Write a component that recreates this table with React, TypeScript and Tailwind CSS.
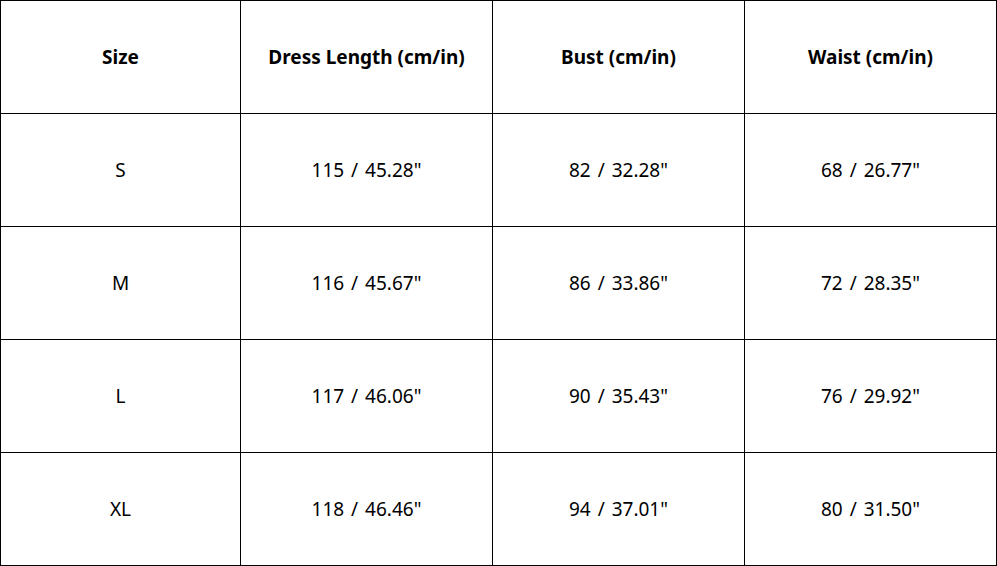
const headers = ['Size', 'Dress Length (cm/in)', 'Bust (cm/in)', 'Waist (cm/in)']

const rows = [
  ['S', '115 / 45.28"', '82 / 32.28"', '68 / 26.77"'],
  ['M', '116 / 45.67"', '86 / 33.86"', '72 / 28.35"'],
  ['L', '117 / 46.06"', '90 / 35.43"', '76 / 29.92"'],
  ['XL', '118 / 46.46"', '94 / 37.01"', '80 / 31.50"'],
]

export default function App() {
  return (
    <div className="w-[997px] h-[566px] bg-white text-black font-['Noto_Sans',sans-serif] text-[19px]">
      <div className="grid grid-cols-[240px_252px_252px_252px] auto-rows-[113px] border-l border-t border-black">
        {headers.map((h) => (
          <div key={h} className="flex items-center justify-center border-r border-b border-black font-bold">
            {h}
          </div>
        ))}
        {rows.map((r) =>
          r.map((c, i) => (
            <div key={r[0] + i} className="flex items-center justify-center border-r border-b border-black [word-spacing:2px]">
              {c}
            </div>
          )),
        )}
      </div>
    </div>
  )
}
